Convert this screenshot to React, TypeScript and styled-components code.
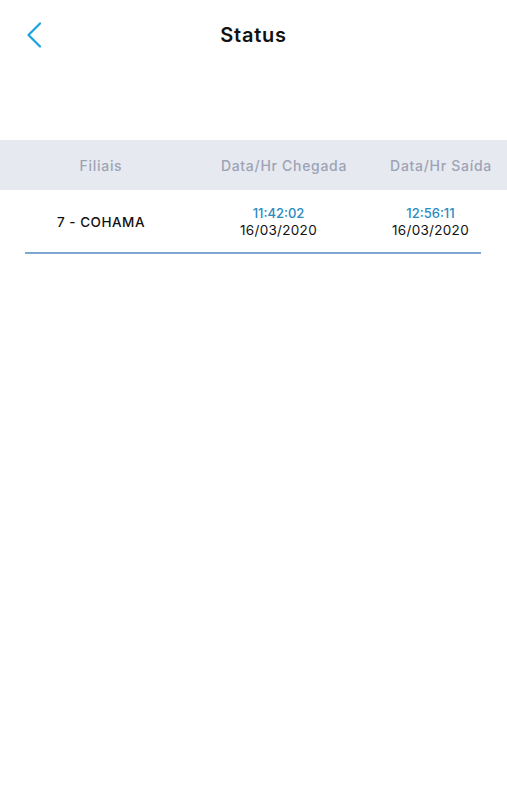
import React from "react";
import styled, { createGlobalStyle } from "styled-components";

const Global = createGlobalStyle`
  html, body { margin: 0; padding: 0; background: #ffffff; }
  body { font-family: Inter, "Open Sans", sans-serif; }
`;

const Page = styled.div`
  width: 507px;
  min-height: 800px;
  background: #ffffff;
  overflow: hidden;
`;

const TopBar = styled.header`
  height: 70px;
  display: grid;
  grid-template-columns: 70px 1fr 70px;
  align-items: center;
`;

const BackButton = styled.button`
  border: none;
  background: transparent;
  padding: 0 0 0 26px;
  height: 30px;
  display: flex;
  align-items: center;
  cursor: pointer;
`;

const Title = styled.h1`
  margin: 0;
  text-align: center;
  font-size: 20px;
  font-weight: 600;
  color: #111111;
  letter-spacing: 0.8px;
`;

const Table = styled.div`
  margin-top: 70px;
`;

const HeadRow = styled.div`
  display: grid;
  grid-template-columns: 202px 164px 150px;
  height: 50px;
  align-items: center;
  background: #e6e9f0;
`;

const HeadCell = styled.div`
  text-align: center;
  font-size: 14px;
  font-weight: 500;
  color: #9ea3b4;
  white-space: nowrap;
  letter-spacing: 0.7px;
`;

const BodyRow = styled.div`
  display: grid;
  grid-template-columns: 202px 153px 151px;
  height: 64px;
  align-items: center;
  position: relative;
  &::after {
    content: "";
    position: absolute;
    left: 25px;
    right: 26px;
    bottom: 0;
    height: 2px;
    background: #7ea6d2;
  }
`;

const Cell = styled.div`
  text-align: center;
  font-size: 13.5px;
  color: #111111;
  white-space: nowrap;
  line-height: 17px;
  letter-spacing: 0.3px;
`;

const BranchCell = styled(Cell)`
  font-weight: 500;
  letter-spacing: 0.5px;
`;

const Time = styled.div`
  color: #2a8ac2;
  font-size: 13px;
  font-weight: 500;
  letter-spacing: 0;
`;

const DateText = styled.div`
  color: #111111;
`;

const rows = [
  { branch: "7 - COHAMA", inTime: "11:42:02", inDate: "16/03/2020", outTime: "12:56:11", outDate: "16/03/2020" },
];

export default function App() {
  return (
    <>
      <Global />
      <Page>
        <TopBar>
          <BackButton aria-label="Voltar">
            <svg width="16" height="26" viewBox="0 0 16 26" fill="none">
              <path d="M14 1.5 L2.5 13 L14 24.5" stroke="#1aa1df" strokeWidth="2.2" strokeLinecap="round" strokeLinejoin="round" />
            </svg>
          </BackButton>
          <Title>Status</Title>
          <div />
        </TopBar>
        <Table>
          <HeadRow>
            <HeadCell>Filiais</HeadCell>
            <HeadCell>Data/Hr Chegada</HeadCell>
            <HeadCell>Data/Hr Saída</HeadCell>
          </HeadRow>
          {rows.map((r) => (
            <BodyRow key={r.branch}>
              <BranchCell>{r.branch}</BranchCell>
              <Cell>
                <Time>{r.inTime}</Time>
                <DateText>{r.inDate}</DateText>
              </Cell>
              <Cell>
                <Time>{r.outTime}</Time>
                <DateText>{r.outDate}</DateText>
              </Cell>
            </BodyRow>
          ))}
        </Table>
      </Page>
    </>
  );
}
